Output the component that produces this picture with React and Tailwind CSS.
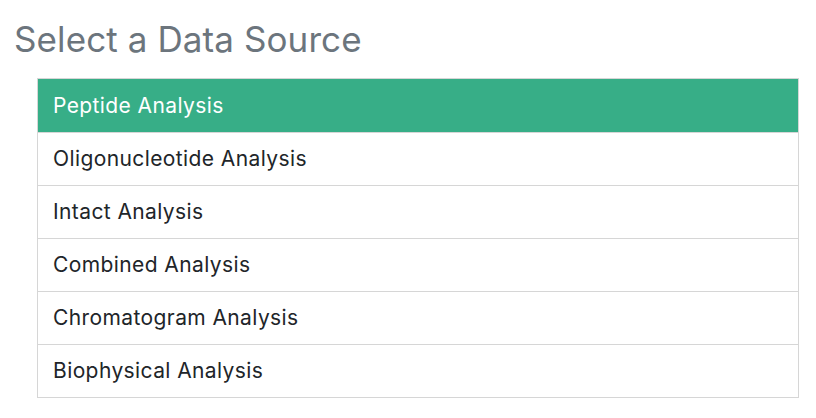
const sources = [
  'Peptide Analysis',
  'Oligonucleotide Analysis',
  'Intact Analysis',
  'Combined Analysis',
  'Chromatogram Analysis',
  'Biophysical Analysis',
];

export default function App() {
  const active = 'Peptide Analysis';

  return (
    <div className="bg-white min-h-[418px] px-[14px] pt-[17px] font-['Inter','Liberation_Sans',sans-serif]">
      <h2 className="text-[35px] leading-[44px] font-normal text-[#6c757d] tracking-[0.1px]">Select a Data Source</h2>
      <ul className="mt-[17px] ml-[23px] w-[762px] border border-[#d6d6d6]">
        {sources.map((name) => (
          <li
            key={name}
            className={`h-[53px] px-[15px] flex items-center text-[21px] tracking-[0.4px] border-t border-[#d6d6d6] first:border-t-0 ${
              name === active ? 'bg-[#37ae87] text-white' : 'bg-white text-[#212529]'
            }`}
          >
            {name}
          </li>
        ))}
      </ul>
    </div>
  );
}
